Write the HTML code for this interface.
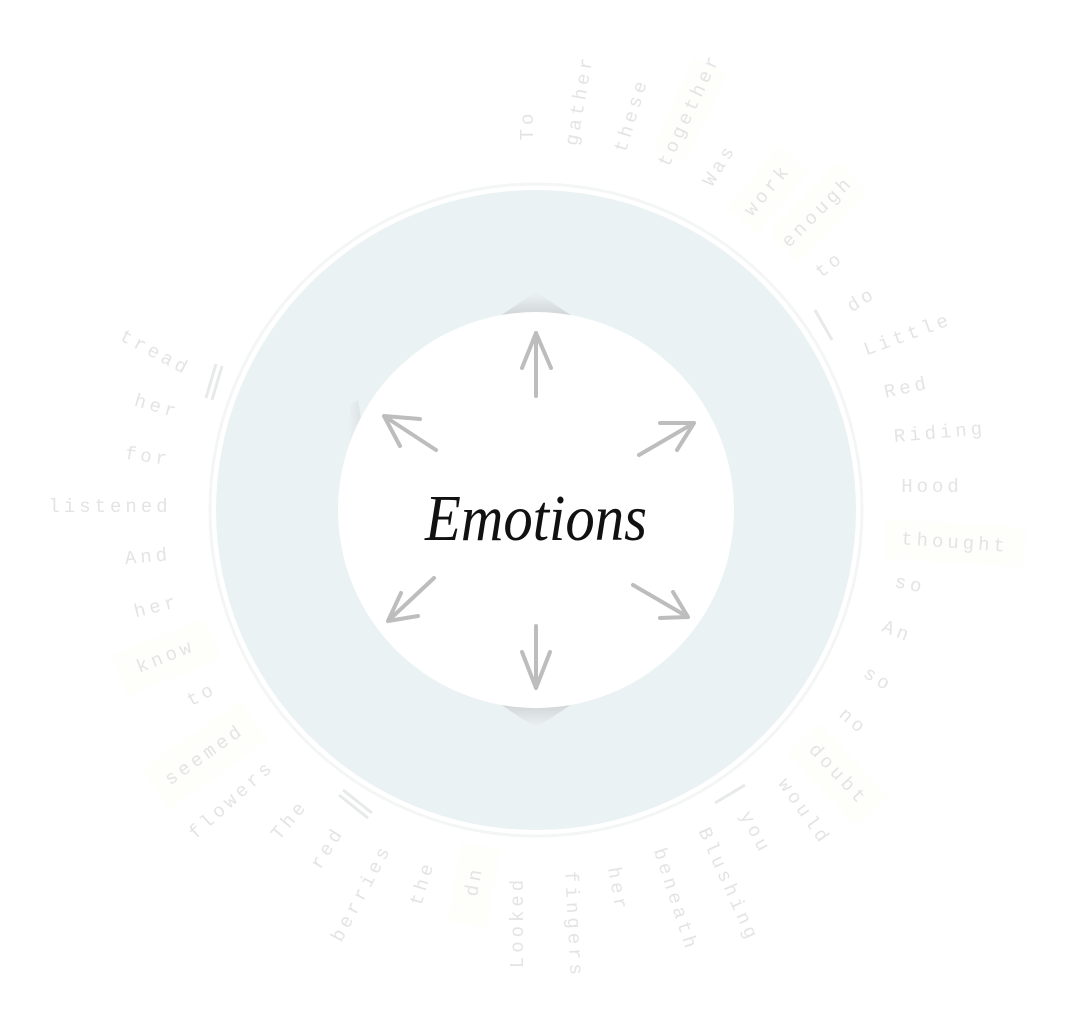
<!DOCTYPE html>
<html><head><meta charset="utf-8"><style>
html,body{margin:0;padding:0;background:#fff;}
svg{display:block}
.w{font-family:"Liberation Mono",monospace;font-size:19px;letter-spacing:4px;fill:#e4e4e4;text-anchor:middle;dominant-baseline:middle}
</style></head><body>
<svg width="1087" height="1015" viewBox="0 0 1087 1015" xmlns="http://www.w3.org/2000/svg">
<defs>
<linearGradient id="sh" x1="0" y1="0" x2="0" y2="1"><stop offset="0" stop-color="#eef3f4"/><stop offset="1" stop-color="#c4c7c8"/></linearGradient>
<linearGradient id="sh2" x1="0" y1="1" x2="0" y2="0"><stop offset="0" stop-color="#eef3f4"/><stop offset="1" stop-color="#c4c7c8"/></linearGradient>
<linearGradient id="sh3" x1="0" y1="0" x2="1" y2="0"><stop offset="0" stop-color="#eef3f4"/><stop offset="1" stop-color="#c4c7c8"/></linearGradient>
</defs>
<circle cx="536" cy="510" r="326" fill="none" stroke="#f4f6f6" stroke-width="3"/>
<circle cx="536" cy="510" r="320" fill="#ebf2f4"/>
<polygon points="500,316 536,292 572,316" fill="url(#sh)" opacity="0.7"/>
<polygon points="500,704 536,728 572,704" fill="url(#sh2)" opacity="0.7"/>
<polygon points="350,405 358,400 366,450 348,450" fill="url(#sh3)" opacity="0.5"/>
<circle cx="536" cy="510" r="198" fill="#fff"/>
<g stroke="#bdbdbd" stroke-width="4" fill="none" stroke-linecap="round" stroke-linejoin="round">
<path d="M536 396 L536 333 M522 368 L536 333 L551 368"/>
<path d="M436 450 L384 416 M420 419 L384 416 L400 446"/>
<path d="M639 455 L694 423 M660 423 L694 423 L677 450"/>
<path d="M434 578 L388 621 M401 593 L388 621 L418 616"/>
<path d="M633 585 L688 617 M660 618 L688 617 L673 592"/>
<path d="M536 626 L536 688 M522 652 L536 688 L550 652"/>
</g>
<text x="425" y="540" textLength="222" lengthAdjust="spacingAndGlyphs" font-family="'Liberation Serif',serif" font-style="italic" font-size="66" fill="#111">Emotions</text>
<g stroke="#e8eaea" stroke-width="3">
<path d="M815 310 L832 340"/>
<path d="M206 398 L216 364 M212 400 L222 366"/>
<path d="M339 795 L368 818 M343 790 L372 813"/>
<path d="M715 803 L745 785"/>
</g>
<g fill="#fefefb">
<rect x="-50" y="-18" width="100" height="36" transform="translate(690,110) rotate(-65)"/>
<rect x="-40" y="-20" width="80" height="40" transform="translate(768,190) rotate(-50)"/>
<rect x="-50" y="-22" width="100" height="44" transform="translate(818,212) rotate(-45)"/>
<rect x="-70" y="-20" width="140" height="40" transform="translate(955,543) rotate(4)"/>
<rect x="-50" y="-22" width="100" height="44" transform="translate(838,775) rotate(47)"/>
<rect x="-40" y="-20" width="80" height="40" transform="translate(474,885) rotate(100)"/>
<rect x="-50" y="-22" width="100" height="44" transform="translate(166,657) rotate(-22)"/>
<rect x="-60" y="-24" width="120" height="48" transform="translate(205,755) rotate(-35)"/>
</g>
<g class="w">
<text transform="translate(528,125) rotate(-90)">To</text>
<text transform="translate(580,100) rotate(-80)">gather</text>
<text transform="translate(632,115) rotate(-73)">these</text>
<text transform="translate(690,110) rotate(-65)">together</text>
<text transform="translate(720,165) rotate(-58)">Was</text>
<text transform="translate(768,190) rotate(-50)">work</text>
<text transform="translate(818,212) rotate(-45)">enough</text>
<text transform="translate(830,265) rotate(-38)">to</text>
<text transform="translate(862,300) rotate(-32)">do</text>
<text transform="translate(908,335) rotate(-20)">Little</text>
<text transform="translate(907,388) rotate(-12)">Red</text>
<text transform="translate(940,433) rotate(-5)">Riding</text>
<text transform="translate(932,487) rotate(0)">Hood</text>
<text transform="translate(955,543) rotate(4)">thought</text>
<text transform="translate(910,585) rotate(12)">so</text>
<text transform="translate(897,632) rotate(22)">An</text>
<text transform="translate(878,680) rotate(32)">so</text>
<text transform="translate(853,722) rotate(40)">no</text>
<text transform="translate(838,775) rotate(47)">doubt</text>
<text transform="translate(804,812) rotate(55)">would</text>
<text transform="translate(755,833) rotate(62)">you</text>
<text transform="translate(728,885) rotate(66)">Blushing</text>
<text transform="translate(675,900) rotate(72)">beneath</text>
<text transform="translate(617,890) rotate(80)">her</text>
<text transform="translate(573,925) rotate(87)">fingers</text>
<text transform="translate(518,922) rotate(-90)">Looked</text>
<text transform="translate(474,885) rotate(100)">up</text>
<text transform="translate(423,883) rotate(-73)">the</text>
<text transform="translate(362,893) rotate(-62)">berries</text>
<text transform="translate(328,848) rotate(-58)">red</text>
<text transform="translate(290,820) rotate(-50)">The</text>
<text transform="translate(232,800) rotate(-42)">flowers</text>
<text transform="translate(205,755) rotate(-35)">seemed</text>
<text transform="translate(202,695) rotate(-28)">to</text>
<text transform="translate(166,657) rotate(-22)">know</text>
<text transform="translate(157,607) rotate(-14)">her</text>
<text transform="translate(148,557) rotate(-5)">And</text>
<text transform="translate(110,507) rotate(0)">listened</text>
<text transform="translate(148,457) rotate(8)">for</text>
<text transform="translate(157,407) rotate(16)">her</text>
<text transform="translate(155,353) rotate(28)">tread</text>
</g>
</svg>
</body></html>
